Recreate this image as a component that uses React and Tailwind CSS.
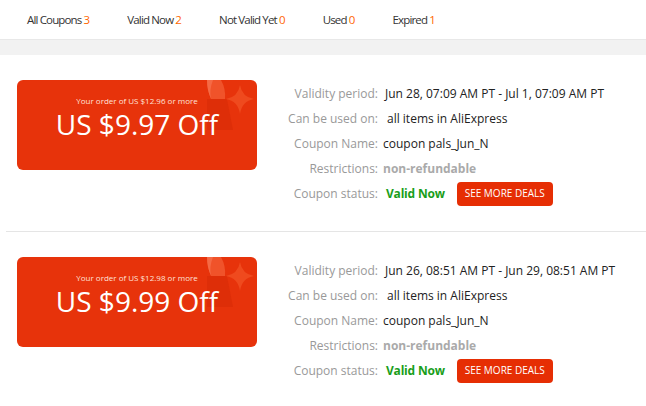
import React from "react";

const tabs = [
  { label: "All Coupons", count: 3 },
  { label: "Valid Now", count: 2 },
  { label: "Not Valid Yet", count: 0 },
  { label: "Used", count: 0 },
  { label: "Expired", count: 1 },
];

const coupons = [
  {
    min: "US $12.96",
    off: "US $9.97 Off",
    period: "Jun 28, 07:09 AM PT - Jul 1, 07:09 AM PT",
  },
  {
    min: "US $12.98",
    off: "US $9.99 Off",
    period: "Jun 26, 08:51 AM PT - Jun 29, 08:51 AM PT",
  },
];

const Decoration = () => (
  <svg className="absolute right-0 top-0" width="60" height="50" viewBox="0 0 60 50">
    <path d="M10 19 L30 19 L36 50 L10 50 Z" fill="#d92c06" opacity="0.6" />
    <path d="M10 0 H24 Q29 9 28 19 L14 19 Q10 10 10 0 Z" fill="#f0532a" />
    <path d="M10 0 H16 Q12 10 14 19 Q10 10 10 0 Z" fill="#f56a45" />
    <path d="M43 5 Q45 17 57 19 Q45 21 43 34 Q41 21 29 19 Q41 17 43 5 Z" fill="#ef4a1e" />
  </svg>
);

const Row = ({ label, children }) => (
  <div className="flex h-[25px] items-center">
    <div className="w-[91px] shrink-0 text-right text-[#999]">{label}</div>
    {children}
  </div>
);

const CouponItem = ({ c }) => (
  <div className="flex pl-[17px] pt-[25px]">
    <div className="relative flex h-[90px] w-[240px] shrink-0 flex-col items-center justify-center overflow-hidden rounded-[6px] bg-[#e7330b] pb-[13px] text-white">
      <Decoration />
      <div className="relative text-[8px] leading-[10px] text-[#ffe2d8]">Your order of {c.min} or more</div>
      <div className="relative mt-[1px] text-[28px] leading-[34px]">{c.off}</div>
    </div>
    <div className="ml-[30px] mt-[1px] text-[12px] text-[#222]">
      <Row label="Validity period:">
        <span className="ml-[7px]">{c.period}</span>
      </Row>
      <Row label="Can be used on:">
        <span className="ml-[9px]">all items in AliExpress</span>
      </Row>
      <Row label="Coupon Name:">
        <span className="ml-[5px]">coupon pals_Jun_N</span>
      </Row>
      <Row label="Restrictions:">
        <span className="ml-[5px] font-bold text-[#aaa]">non-refundable</span>
      </Row>
      <Row label="Coupon status:">
        <span className="ml-[8px] font-bold tracking-[-0.2px] text-[#1a9e1a]">Valid Now</span>
        <button className="ml-[12px] h-[24px] w-[96px] rounded-[4px] bg-[#e62e04] text-[10px] text-white">
          SEE MORE DEALS
        </button>
      </Row>
    </div>
  </div>
);

export default function App() {
  return (
    <div className="h-[406px] w-[646px] overflow-hidden bg-white" style={{ fontFamily: "'Open Sans', sans-serif" }}>
      <div className="flex h-[40px] items-center gap-[38px] border-b border-[#e8e8e8] pl-[27px] text-[11.5px] tracking-[-0.85px] text-[#333]">
        {tabs.map((t) => (
          <div key={t.label}>
            {t.label} <span className="text-[#f60]">{t.count}</span>
          </div>
        ))}
      </div>
      <div className="h-[15px] bg-[#f2f2f2]" />
      <CouponItem c={coupons[0]} />
      <div className="ml-[6px] mt-[25px] border-t border-[#e5e5e5]" />
      <CouponItem c={coupons[1]} />
    </div>
  );
}
